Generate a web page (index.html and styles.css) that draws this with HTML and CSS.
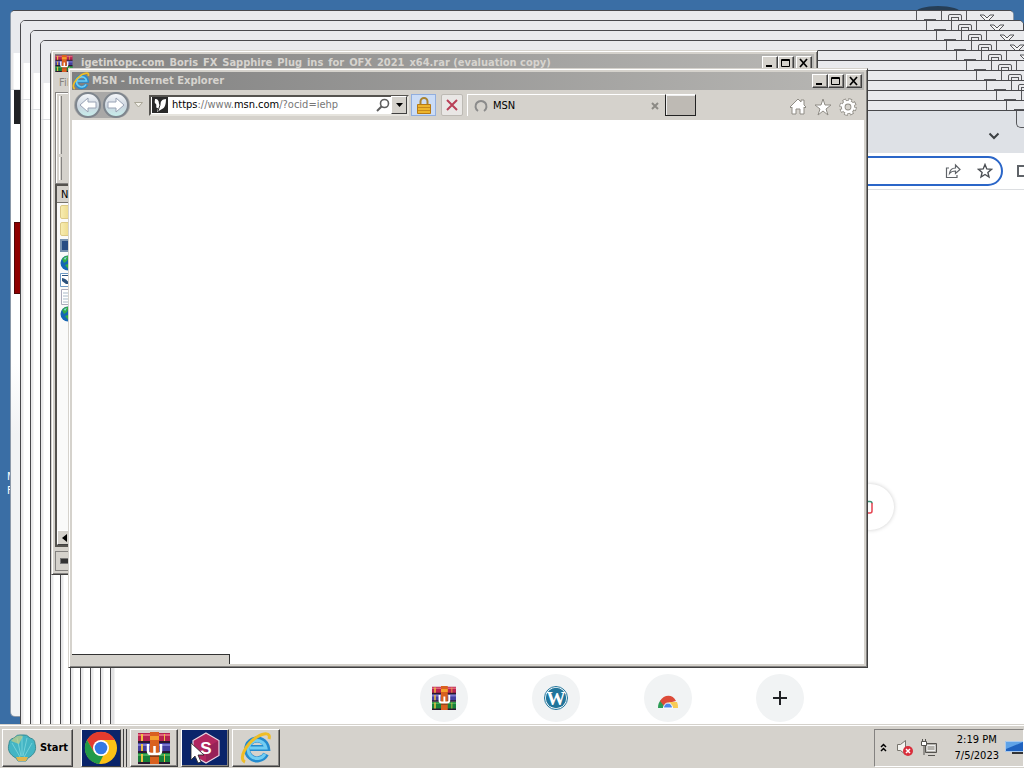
FILE: index.html
```html
<!DOCTYPE html>
<html lang="en">
<head>
<meta charset="utf-8">
<title>Desktop</title>
<link rel="stylesheet" href="styles.css">
</head>
<body>
<svg class="sprites" aria-hidden="true">
  <symbol id="rar" viewBox="0 0 32 32">
    <path fill="#b8234f" d="M0 1h32v9H0z"/><path fill="#443fa0" d="M0 11h32v9H0z"/><path fill="#16803a" d="M0 21h32v10H0z"/>
    <path fill="#e2647c" d="M0 2h32v2H0z"/><path fill="#7c78d0" d="M0 12h32v2H0z"/><path fill="#45ad58" d="M0 22h32v2H0z"/>
    <path fill="#2a1830" d="M0 9h32v2H0zM0 19h32v2H0zM0 30h32v2H0z"/>
    <path fill="#f0c040" d="M3 2h2v7H3zM3 12h2v7H3zM3 22h2v8H3zM26 2h1v7h-1zM26 22h1v8h-1z"/>
    <path fill="#d9601f" d="M12 0h9v32h-9z"/><path fill="#f4a02c" d="M12 4h9v4h-9z"/><path fill="#843b18" d="M12 23h9v2h-9z"/>
    <path fill="none" stroke="#fff" stroke-width="2.500" d="M10 12v7q0 3 3 3h7q3 0 3-3v-7M16.500 14v7"/>
  </symbol>
  <symbol id="ie" viewBox="0 0 32 32">
    <path fill="none" stroke="#238bcf" stroke-width="6" d="M26 22a10 10 0 1 1 1-6H10"/>
    <path fill="none" stroke="#72cdf2" stroke-width="3" d="M25 22a9 9 0 1 1 1-6H10"/>
    <path fill="none" stroke="#efbd26" stroke-width="3" d="M5 30C-2 27 6 12 17 5C24 1 31 0 29 7"/>
  </symbol>
  <symbol id="globe" viewBox="0 0 16 16"><circle cx="8" cy="8" r="7.500" fill="#1666b4"/><path fill="#35ad45" d="M2 4q3-4 7-3l-2 5-3 2zM5 10l6-2 2 3-4 4z"/><path fill="#8fd0f2" d="M4 3l3-1-2 3z"/></symbol>
  <symbol id="min" viewBox="0 0 12 10"><path fill="#000" d="M2 7h6v2H2z"/></symbol>
  <symbol id="max" viewBox="0 0 12 10"><path fill="none" stroke="#000" d="M1.500 1.500h8v7h-8zM1 2.500h9"/></symbol>
  <symbol id="close" viewBox="0 0 12 10"><path fill="none" stroke="#000" stroke-width="1.700" d="M2 1l7 8M9 1L2 9"/></symbol>
  <symbol id="ghost-x" viewBox="0 0 16 14"><path fill="#f4f4f5" stroke="#55565a" d="M1 2h4l3 3 3-3h4l-5 5 5 5h-4L8 9l-3 3H1l5-5z"/></symbol>
</svg>

<main class="desktop">
  <span class="desktop-disc"></span>
  <p class="desktop-label">M<br>F</p>

  <section class="trail first" style="--i:0"><div class="trail-caption"><i></i><i></i><i><svg width="16" height="14"><use href="#ghost-x"/></svg></i></div><div class="trail-toolbar"></div><span class="chip dark"></span><span class="chip red"></span></section>
  <section class="trail" style="--i:1"><div class="trail-caption"><i></i><i></i><i><svg width="16" height="14"><use href="#ghost-x"/></svg></i></div><div class="trail-toolbar"></div></section>
  <section class="trail" style="--i:2"><div class="trail-caption"><i></i><i></i><i><svg width="16" height="14"><use href="#ghost-x"/></svg></i></div><div class="trail-toolbar"></div></section>
  <section class="trail" style="--i:3"><div class="trail-caption"><i></i><i></i><i><svg width="16" height="14"><use href="#ghost-x"/></svg></i></div><div class="trail-toolbar"></div></section>
  <section class="trail" style="--i:4"><div class="trail-caption"><i></i><i></i><i><svg width="16" height="14"><use href="#ghost-x"/></svg></i></div><div class="trail-toolbar"></div></section>
  <section class="trail" style="--i:5"><div class="trail-caption"><i></i><i></i><i></i></div><div class="trail-toolbar"></div></section>
  <section class="trail" style="--i:6"><div class="trail-caption"><i></i><i></i><i></i></div><div class="trail-toolbar"></div></section>
  <section class="trail" style="--i:7"><div class="trail-caption"><i></i><i></i><i></i></div><div class="trail-toolbar"></div></section>
  <section class="trail" style="--i:8"><div class="trail-caption"><i></i><i></i><i></i></div><div class="trail-toolbar"></div></section>
  <section class="trail" style="--i:9"><div class="trail-caption"><i></i><i></i><i></i></div><div class="trail-toolbar"></div></section>

  <section class="trail chrome" style="--i:10">
    <div class="trail-caption"><i></i><i></i><i></i></div>
    <button class="tab-search" aria-label="Search tabs"><svg width="12" height="8" viewBox="0 0 12 8"><path d="M1.500 1.500L6 6l4.500-4.500" fill="none" stroke="#3c4043" stroke-width="2"/></svg></button>
    <div class="trail-toolbar">
      <div class="omnibox">
        <button aria-label="Share"><svg width="16" height="16" viewBox="0 0 16 16"><path d="M4 5H1.500v9.500H12V12M4.500 10.500c.5-4 3-5.500 6-5.500V2l4.500 4.500-4.500 4V8c-3 0-4.500.5-6 2.500z" fill="none" stroke="#5f6368" stroke-width="1.200"/></svg></button>
        <button aria-label="Bookmark"><svg width="16" height="16" viewBox="0 0 16 16"><path d="M8 1.500l1.800 4.400 4.700.4-3.600 3.100 1.100 4.600L8 11.500 4 14l1.100-4.600-3.600-3.100 4.700-.4z" fill="none" stroke="#4b4f54" stroke-width="1.400"/></svg></button>
      </div>
      <span class="side-panel"></span>
    </div>
    <nav class="shortcuts">
      <a href="#" aria-label="WinRAR"><svg width="24" height="24"><use href="#rar"/></svg></a>
      <a href="#" aria-label="WordPress"><svg width="24" height="24" viewBox="0 0 24 24"><circle cx="12" cy="12" r="11.500" fill="#fff" stroke="#21759b"/><circle cx="12" cy="12" r="10.200" fill="#21759b"/><text x="12" y="19" text-anchor="middle" class="wp">W</text></svg></a>
      <a href="#" aria-label="Chrome Web Store"><svg width="24" height="24" viewBox="0 0 24 24"><path fill="#2c9c55" d="M2 22c0-4 1-6 3-8l5 8z"/><path fill="#dd4b39" d="M4 15C8 8 17 8 20 15l-8 2-4 3z"/><path fill="#f8cb56" d="M13 16h8q1 2 1 6h-8z"/><path fill="#4d87ec" stroke="#fff" d="M7.500 22a4.500 5 0 0 1 9 0z"/></svg></a>
      <a href="#" aria-label="Add shortcut"><svg width="14" height="14" viewBox="0 0 14 14"><path d="M7 0v14M0 7h14" stroke="#202124" stroke-width="2"/></svg></a>
    </nav>
    <span class="mic"><svg width="14" height="14" viewBox="0 0 14 14"><path d="M4 1.500h4q2 0 2 2" fill="none" stroke="#3f8f75" stroke-width="1.500"/><path d="M10 3v8q0 2-2 2H4" fill="none" stroke="#e54350" stroke-width="1.500"/></svg></span>
  </section>

  <section class="window rar-window">
    <header class="titlebar">
      <svg width="18" height="17"><use href="#rar"/></svg>
      <h2>igetintopc.com_Boris_FX_Sapphire_Plug_ins_for_OFX_2021_x64.rar (evaluation copy)</h2>
      <div class="controls"><button aria-label="Minimize"><svg width="12" height="10"><use href="#min"/></svg></button><button aria-label="Maximize"><svg width="12" height="10"><use href="#max"/></svg></button><button aria-label="Close"><svg width="12" height="10"><use href="#close"/></svg></button></div>
    </header>
    <div class="rar-menu">File</div>
    <div class="rar-tools"><span class="band tall"></span><span class="band"></span></div>
    <div class="rar-list">
      <div class="column">Name</div>
      <ul>
        <li><span class="folder"></span></li><li><span class="folder"></span></li>
        <li><span class="monitor"></span></li>
        <li><svg width="16" height="16"><use href="#globe"/></svg></li>
        <li><svg width="16" height="14" viewBox="0 0 16 14"><path fill="#fff" stroke="#6d9ac5" d="M.5.500h15v13H.5z"/><path fill="#2b527d" d="M2 5q4 0 8 6H6L2 8zM2 2h12v1H2z"/></svg></li>
        <li><svg width="14" height="16" viewBox="0 0 14 16"><path fill="#fff" stroke="#aab" d="M1.500.500h12v15h-12z"/><path stroke="#a9bac8" d="M3 4h9M3 7h9M3 10h9M3 13h9"/></svg></li>
        <li><svg width="16" height="16"><use href="#globe"/></svg></li>
      </ul>
      <button class="scroll-left" aria-label="Scroll left"><svg width="5" height="8" viewBox="0 0 5 8"><path d="M5 0v8L0 4z"/></svg></button>
    </div>
    <div class="rar-status"><span></span></div>
  </section>

  <section class="window ie-window">
    <header class="titlebar">
      <svg width="18" height="18"><use href="#ie"/></svg>
      <h1>MSN - Internet Explorer</h1>
      <div class="controls"><button aria-label="Minimize"><svg width="12" height="10"><use href="#min"/></svg></button><button aria-label="Maximize"><svg width="12" height="10"><use href="#max"/></svg></button><button aria-label="Close"><svg width="12" height="10"><use href="#close"/></svg></button></div>
    </header>
    <div class="ie-bar">
      <div class="history">
        <button aria-label="Back"><svg width="18" height="16" viewBox="0 0 18 16"><path d="M1 8l8-7v4h8v6H9v4z" fill="#fff" stroke="#9aa3b5"/></svg></button>
        <button aria-label="Forward"><svg width="18" height="16" viewBox="0 0 18 16"><path d="M17 8L9 1v4H1v6h8v4z" fill="#fff" stroke="#9aa3b5"/></svg></button>
      </div>
      <svg class="recent" width="9" height="6" viewBox="0 0 9 6"><path d="M.5.500h8l-4 4.500z" fill="#f2f0e9" stroke="#aaa798"/></svg>
      <div class="address">
        <svg width="16" height="16" viewBox="0 0 16 16"><path fill="#292929" d="M0 0h16v16H0z"/><path fill="#fff" d="M3 2c3 0 4 2 4 5l1 1c0-3 2-6 6-6 0 5-1 9-4 10l-5 3 1-4C3 11 5 9 4 7 2 6 3 4 3 2z"/><path stroke="#292929" d="M8 3v5l-2 6" fill="none"/></svg>
        <div class="url" role="textbox" aria-label="Address" contenteditable="true" spellcheck="false"><b>https</b>://www.<b>msn.com</b>/?ocid=iehp</div>
        <svg width="14" height="14" viewBox="0 0 14 14"><circle cx="8.500" cy="5.500" r="4" fill="none" stroke="#5e5e5e" stroke-width="1.600"/><path d="M5.500 8.500L1 13" stroke="#5e5e5e" stroke-width="2"/></svg>
        <button class="drop" aria-label="Show address list"><svg width="7" height="4" viewBox="0 0 7 4"><path d="M0 0h7L3.500 4z"/></svg></button>
      </div>
      <button class="lock" aria-label="Security report"><svg width="14" height="17" viewBox="0 0 14 17"><path d="M3.500 9V4.500a3.500 3.500 0 0 1 7 0V9" fill="none" stroke="#a98432" stroke-width="2"/><path fill="#edb52d" stroke="#b67a17" d="M.5 7.500h13v9H.5z"/><path stroke="#c78a1c" d="M1 10.500h12M1 13.500h12"/></svg></button>
      <button class="stop" aria-label="Stop"><svg width="12" height="12" viewBox="0 0 12 12"><path d="M1 1l10 10M11 1L1 11" stroke="#b93f57" stroke-width="2"/></svg></button>
      <div class="tab">
        <svg width="14" height="14" viewBox="0 0 14 14"><path d="M4 12a5.500 5.500 0 1 1 6 0" fill="none" stroke="#8b8b8b" stroke-width="2"/></svg>
        <span>MSN</span>
        <button aria-label="Close tab"><svg width="8" height="8" viewBox="0 0 8 8"><path d="M1 1l6 6M7 1L1 7" stroke="#8c8a85" stroke-width="2"/></svg></button>
      </div>
      <button class="new-tab" aria-label="New tab"></button>
      <div class="tools">
        <button aria-label="Home"><svg width="18" height="18" viewBox="0 0 18 18"><path d="M1 9l8-8 3 3V2h3v5l2 2-1 1-1-1v7h-4v-5H7v5H3V9l-1 1z" fill="#fff" stroke="#8f8c85"/></svg></button>
        <button aria-label="Favorites"><svg width="18" height="18" viewBox="0 0 18 18"><path d="M9 1l2 6h6l-5 4 2 6-5-4-5 4 2-6-5-4h6z" fill="#fff" stroke="#8f8c85"/></svg></button>
        <button aria-label="Tools"><svg width="18" height="18" viewBox="0 0 18 18"><circle cx="9" cy="9" r="7" fill="none" stroke="#8f8c85" stroke-width="3.500" stroke-dasharray="3.500 2"/><circle cx="9" cy="9" r="4.800" fill="none" stroke="#8f8c85" stroke-width="4.600"/><circle cx="9" cy="9" r="6.800" fill="none" stroke="#fff" stroke-width="2.200" stroke-dasharray="2.300 3.040" stroke-dashoffset="-.6"/><circle cx="9" cy="9" r="4.800" fill="none" stroke="#fff" stroke-width="2.800"/></svg></button>
      </div>
    </div>
    <div class="ie-page"><div class="status-bubble"></div></div>
  </section>
</main>

<footer class="taskbar">
  <button class="task start"><svg width="30" height="28" viewBox="0 0 30 28"><path fill="#44b5c4" stroke="#3c8c93" d="M9 24C3 21 0 16 2 10q0-5 5-6 3-4 8-3 5-1 8 3 5 1 5 6c2 6-1 11-7 14l-2 3h-8z"/><path fill="none" stroke="#74d2da" d="M13 23L5 9M14 22L10 4M15 22V3M16 22l4-18M17 23l8-14"/><path fill="#e1b64f" d="M9 23h12l-2 4h-8z"/><path fill="#ddd27a" opacity=".6" d="M4 7q6-7 12-5l-4 8z"/></svg><span>Start</span></button>
  <button class="task navy stack" aria-label="Google Chrome"><svg width="34" height="34" viewBox="0 0 34 34"><circle cx="17" cy="17" r="16" fill="#fbc116"/><path fill="#e33b2e" d="M3 9a16 16 0 0 1 28 0H17l-7 12z"/><path fill="#229a48" d="M3 9l7 12q3 4 9 4l-4 8A16 16 0 0 1 3 9z"/><circle cx="17" cy="17" r="8" fill="#fff"/><circle cx="17" cy="17" r="6.300" fill="#3479e4"/></svg></button>
  <button class="task" aria-label="WinRAR"><svg width="32" height="32"><use href="#rar"/></svg></button>
  <button class="task navy" aria-label="Sapphire"><svg width="42" height="34" viewBox="0 0 42 34"><path fill="#b1265f" stroke="#ead6e2" stroke-width="1.200" d="M22 2l13 7.500v15L22 32 9 24.500v-15z"/><path fill="#7d1d52" d="M22 17l12-7v14l-12 7z" opacity=".5"/><text x="22" y="23" text-anchor="middle" class="sapphire">S</text><path fill="#fff" stroke="#222" stroke-width=".8" d="M7 12v17l4-4 3 7 3-1-3-7h6z"/></svg></button>
  <button class="task" aria-label="Internet Explorer"><svg width="32" height="32"><use href="#ie"/></svg></button>
  <div class="tray">
    <button aria-label="Show hidden icons"><svg width="7" height="9" viewBox="0 0 7 9"><path d="M1 4l2.500-2.500L6 4M1 8l2.500-2.500L6 8" fill="none" stroke="#000" stroke-width="1.500"/></svg></button>
    <svg width="18" height="18" viewBox="0 0 18 18"><path fill="#f5f4f0" stroke="#77746d" d="M1.500 5.500h3l5-4v14l-5-4h-3z"/><circle cx="12" cy="12" r="5" fill="#d92e3b"/><path d="M10 10l4 4M14 10l-4 4" stroke="#fff" stroke-width="1.500"/></svg>
    <svg width="18" height="18" viewBox="0 0 18 18"><path fill="#b4b2ac" stroke="#55534f" d="M5.500 4.500h11v9h-11zM8 16.500h7"/><path fill="none" stroke="#eee" d="M7 6.500h8v5H7z"/><path fill="#fff" stroke="#55534f" d="M1.500 2.500h5v4h-5zM2.500 0v2M5.500 0v2M4 7v9"/></svg>
    <time>2:19 PM<br>7/5/2023</time>
    <svg class="show-desktop" width="18" height="14" viewBox="0 0 18 14"><path fill="#1f62bf" stroke="#a9c9ec" d="M.5.500h19v10H.5z"/><path fill="#5fa3e8" d="M1 1h17L1 8z"/><path fill="#333" d="M7 11h11v2H7z"/></svg>
  </div>
</footer>
</body>
</html>
```

FILE: styles.css
```css
* { box-sizing: border-box; }
html, body { height: 100%; }
body {
  margin: 0;
  display: flex;
  flex-direction: column;
  overflow: hidden;
  font: 11px/14px "DejaVu Sans Condensed", "DejaVu Sans", sans-serif;
  color: #000;
  background: #3a6ea5;
}
button { border: 0; padding: 0; margin: 0; background: none; font: inherit; color: inherit; display: flex; align-items: center; justify-content: center; flex: none; }
svg { display: block; flex: none; }
h1, h2, p, ul { margin: 0; padding: 0; list-style: none; }
.sprites { position: absolute; width: 0; height: 0; }

.desktop { flex: 1; position: relative; overflow: hidden; background: #3a6ea5; }
.desktop-disc { position: absolute; right: 63px; top: 6px; width: 46px; height: 14px; border-radius: 50%; background: #263e56; }
.desktop-label { position: absolute; left: 7px; top: 470px; color: #fff; }

/* Cascaded copies left behind by the dragged browser window */
.trail {
  position: absolute;
  left: calc(10px + var(--i) * 10px);
  top: calc(10px + var(--i) * 10px);
  right: calc(10px - var(--i) * 10px);
  bottom: -10px;
  border: 1px solid #48484c;
  border-radius: 5px 5px 0 0;
  background: linear-gradient(90deg, #e9e9ea 2px, #fff 3px);
  overflow: hidden;
}
.trail.first { bottom: 7px; border-radius: 5px; border-color: #48484c #8a98a8 #8a98a8; background: linear-gradient(#fff 50%, #f1f3f4 60%); }
.trail-caption { height: 42px; display: flex; justify-content: flex-end; background: #e9eaed; }
.trail-caption i { position: relative; width: 25px; height: 17px; border: solid #55565a; border-width: 0 0 1px 1px; }
.trail-caption i:first-child { border-bottom-left-radius: 5px; }
.trail-caption i:last-child { width: 47px; padding: 2px 0 0 12px; }
.trail-caption i:not(:last-child)::before { content: ""; position: absolute; left: 7px; top: 8px; width: 10px; height: 3px; border: 1px solid #55565a; }
.trail-caption i:nth-child(2)::before { top: 3px; left: 6px; width: 12px; height: 9px; border-radius: 2px; }
.trail-caption i:nth-child(2)::after { content: ""; position: absolute; left: 9px; top: 6px; width: 6px; height: 4px; border: 1px solid #55565a; }
.trail-toolbar { height: 37px; border-bottom: 1px solid #dcdee1; background: linear-gradient(90deg, #e9e9ea 2px, #fff 3px); }
.chip { position: absolute; left: 3px; width: 7px; }
.chip.dark { top: 79px; height: 34px; background: #202124; }
.chip.red { top: 211px; height: 72px; background: #8e0000; border: 1px solid #4c0808; }

.chrome { background: linear-gradient(90deg, #e2e2e3 3px, #fff 4px); border-bottom: 0; }
.chrome .trail-caption { background: #dee1e6; }
.tab-search { position: absolute; right: 110px; top: 18px; width: 18px; height: 14px; }
.chrome .trail-toolbar { display: flex; align-items: center; padding-right: 81px; }
.omnibox { flex: 1; display: flex; align-items: center; justify-content: flex-end; gap: 16px; height: 30px; padding-right: 8px; border: 2px solid #2b66c8; border-radius: 15px; }
.side-panel { margin-left: 14px; width: 15px; height: 12px; border: 2px solid #5f6368; }
.shortcuts { position: absolute; left: 309px; bottom: 12px; display: flex; gap: 64px; }
.shortcuts a { width: 48px; height: 48px; border-radius: 50%; background: #f1f3f4; display: flex; align-items: center; justify-content: center; }
.wp { font: bold 19px "Liberation Serif", serif; fill: #fff; }
.mic { position: absolute; left: 735px; top: 373px; width: 48px; height: 46px; border-radius: 50%; display: flex; align-items: center; padding-left: 16px; background: #fff; box-shadow: 0 0 4px #ccc; }

.window { position: absolute; display: flex; flex-direction: column; padding: 3px; background: #d5d2cc; border: 1px solid; border-color: #d5d2cc #404040 #404040 #d5d2cc; box-shadow: inset 1px 1px #fff, inset -1px -1px #848280; }
.titlebar { height: 18px; flex: none; display: flex; align-items: center; gap: 2px; padding-right: 2px; background: linear-gradient(90deg, #808080, #b8b7b4); color: #d7d4cf; }
.titlebar h1, .titlebar h2 { flex: 1; font-size: 11px; line-height: 18px; font-weight: bold; white-space: nowrap; overflow: hidden; }
.controls { display: flex; }
.controls button { width: 16px; height: 14px; background: #d5d2cc; border: 1px solid; border-color: #fff #404040 #404040 #fff; box-shadow: inset -1px -1px #848280; }
.controls button:last-child { margin-left: 2px; }

.rar-window { left: 51px; top: 50px; right: 206px; bottom: 149px; }
.rar-window .titlebar h2 { padding-left: 6px; }
.rar-menu { height: 20px; padding: 4px; color: #85827c; }
.rar-tools { height: 92px; border: 1px solid #848280; box-shadow: inset 1px 1px #fff; padding: 3px; display: flex; flex-direction: column; gap: 3px; }
.band { border-left: 1px solid #fff; border-right: 1px solid #848280; width: 3px; height: 23px; }
.band.tall { height: 58px; }
.rar-list { flex: 1; display: flex; flex-direction: column; background: #fafaf9; border: 2px solid #55534f; border-right-color: #fff; }
.column { height: 17px; padding: 2px 4px; background: #d5d2cc; border-bottom: 1px solid #77746e; }
.rar-list ul { flex: 1; padding-left: 3px; }
.rar-list li { height: 17px; display: flex; align-items: center; }
.folder { width: 16px; height: 14px; background: linear-gradient(90deg, #f7ecb0, #e6cd72); border: 1px solid #dcc987; border-radius: 2px; }
.monitor { width: 15px; height: 13px; background: #284d83; border: 2px solid #7792b0; }
.scroll-left { width: 14px; height: 15px; background: #d5d2cc; border: 1px solid; border-color: #fff #404040 #404040 #fff; }
.rar-status { height: 20px; margin-top: 4px; padding: 6px 4px; border: 1px solid #848280; }
.rar-status span { display: block; width: 16px; height: 6px; background: #333; border: 1px solid #777; }

.ie-window { left: 68px; top: 68px; right: 156px; bottom: 56px; }
.ie-bar { flex: none; height: 30px; display: flex; align-items: center; padding: 0 7px 0 2px; }
.history { display: flex; gap: 2px; padding: 0 1px; border-radius: 14px; background: #a9a8a7; }
.history button { width: 26px; height: 26px; border-radius: 50%; border: 2px solid #7e858d; background: linear-gradient(#f5f7fa, #ccd5df 55%, #c7edeb); }
.recent { margin: 0 6px 0 4px; }
.address { flex: 1; max-width: 260px; height: 21px; display: flex; align-items: center; background: #fff; border: 2px solid; border-color: #55534f #e6e4de #e6e4de #55534f; padding-left: 1px; }
.url { flex: 1; padding-left: 4px; color: #777; white-space: nowrap; outline: 0; overflow: hidden; }
.url b { font-weight: normal; color: #000; }
.drop { width: 16px; height: 18px; margin-left: 1px; background: #d5d2cc; border: 1px solid; border-color: #fff #404040 #404040 #fff; }
.lock { width: 25px; height: 22px; margin-left: 2px; background: #cbdcf6; border: 1px solid #91aede; }
.stop { width: 22px; height: 22px; margin-left: 5px; background: #e9e7e5; border: 1px solid #bdbab4; border-radius: 2px; }
.tab { flex: 1; max-width: 198px; height: 22px; margin-left: 4px; display: flex; align-items: center; gap: 5px; padding: 0 6px; border: solid #fff; border-width: 1px 0 0 1px; }
.tab span { flex: 1; }
.new-tab { width: 31px; height: 22px; background: #bebab4; border: 1px solid; border-color: #fff #222 #222 #222; box-shadow: inset 1px 1px #eee; }
.tools { display: flex; gap: 7px; margin-left: auto; padding-top: 3px; }
.ie-page { flex: 1; background: #fff; display: flex; align-items: flex-end; }
.status-bubble { width: 20%; height: 10px; background: #d5d2cc; border: solid #333; border-width: 1px 1px 0 0; }

.taskbar { flex: none; height: 44px; display: flex; align-items: center; gap: 3px; padding: 3px 0 1px 2px; background: #d5d2cc; border-top: 1px solid #d5d2cc; box-shadow: inset 0 1px #fff; }
.task { width: 48px; height: 38px; border: 1px solid; border-color: #fff #404040 #404040 #fff; box-shadow: inset -1px -1px #848280; }
.start { width: 71px; margin-right: 5px; gap: 3px; font-weight: bold; }
.navy { background: #0a246a; }
.stack { width: 40px; margin-right: 6px; box-shadow: 2px 0 #d5d2cc, 3px 0 #404040, 5px 0 #d5d2cc, 6px 0 #404040; }
.sapphire { font: bold 17px "Liberation Sans", sans-serif; fill: #fff; }
.tray { margin-left: auto; height: 38px; width: 150px; display: flex; align-items: center; gap: 6px; padding-left: 5px; border: 1px solid; border-color: #848280 #fff #fff #848280; overflow: hidden; }
.tray button { margin-right: 3px; }
.tray time { margin-left: auto; text-align: center; line-height: 16px; }
```
